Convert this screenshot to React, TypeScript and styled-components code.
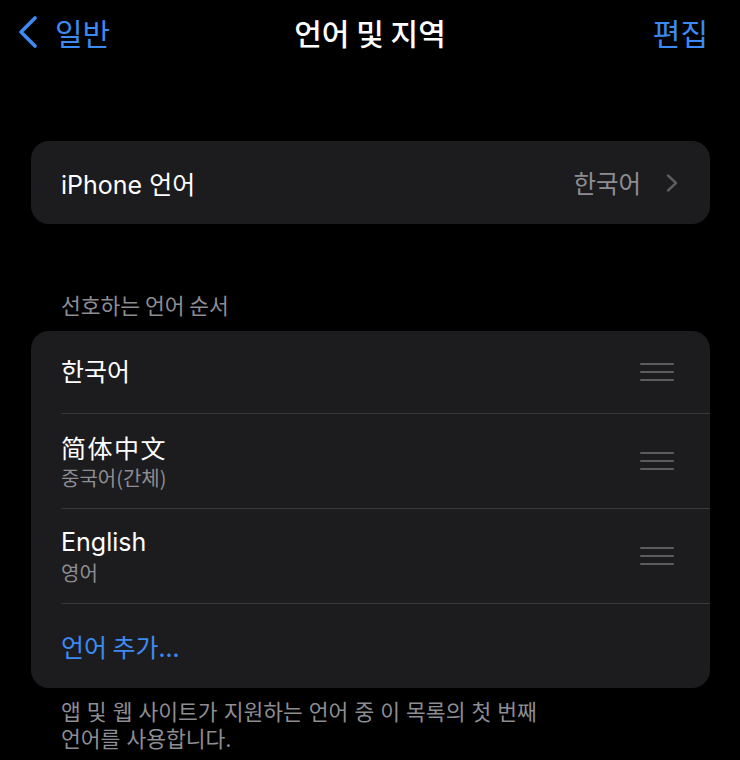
import React from "react";
import styled, { createGlobalStyle } from "styled-components";

const GlobalStyle = createGlobalStyle`
  html, body {
    margin: 0;
    padding: 0;
    background: #000;
  }
  body {
    font-family: Inter, "Noto Sans CJK KR", "Noto Sans CJK SC", sans-serif;
    color: #fff;
    -webkit-font-smoothing: antialiased;
  }
`;

const BLUE = "#3c8af3";
const GRAY = "#8d8d93";

const Screen = styled.div`
  width: 740px;
  height: 760px;
  overflow: hidden;
  background: #000;
`;

const NavBar = styled.header`
  height: 64px;
  display: grid;
  grid-template-columns: 1fr auto 1fr;
  align-items: center;
  padding: 0 17px;
`;

const BackButton = styled.div`
  display: flex;
  align-items: center;
  gap: 17px;
  color: ${BLUE};
  font-size: 30px;
  font-family: "Noto Sans CJK KR", sans-serif;
  line-height: 1;
`;

const Title = styled.h1`
  margin: 0;
  font-size: 30px;
  font-weight: 500;
  font-family: "Noto Sans CJK KR", sans-serif;
  color: #fff;
  line-height: 1;
`;

const EditButton = styled.div`
  justify-self: end;
  padding-right: 15px;
  color: ${BLUE};
  font-size: 30px;
  font-family: "Noto Sans CJK KR", sans-serif;
  line-height: 1;
`;

const Content = styled.main`
  padding: 77px 30px 0 31px;
`;

const Card = styled.section`
  background: #1c1c1e;
  border-radius: 18px;
  overflow: hidden;
`;

const SimpleRow = styled.div`
  height: 83px;
  display: flex;
  align-items: center;
  padding: 0 32px 0 30px;
`;

const Label = styled.span`
  font-size: 25px;
  color: #fff;
  flex: 1;
`;

const Value = styled.span`
  font-size: 24.5px;
  color: ${GRAY};
  font-family: "Noto Sans CJK KR", sans-serif;
  margin-right: 25px;
`;

const SectionHeader = styled.div`
  margin: 69px 0 14px;
  padding-left: 30px;
  font-size: 21.5px;
  line-height: 24px;
  color: ${GRAY};
  font-family: "Noto Sans CJK KR", sans-serif;
`;

const ListRow = styled.div<{ $h: number; $last?: boolean }>`
  height: ${(p) => p.$h}px;
  margin-left: 30px;
  padding-right: 36px;
  display: flex;
  align-items: center;
  border-bottom: ${(p) => (p.$last ? "none" : "1px solid #38383a")};
  box-sizing: border-box;
`;

const TextStack = styled.div`
  flex: 1;
  display: flex;
  flex-direction: column;
  gap: 4px;
`;

const Primary = styled.span<{ $lang?: string }>`
  font-size: 25px;
  letter-spacing: ${(p) => (p.$lang === "zh" ? "1.5px" : "0")};
  font-family: ${(p) =>
    p.$lang === "zh"
      ? `"Noto Sans CJK SC", sans-serif`
      : `Inter, "Noto Sans CJK KR", sans-serif`};
  color: #fff;
  line-height: 30px;
`;

const Secondary = styled.span`
  font-size: 20px;
  color: ${GRAY};
  line-height: 24px;
  font-family: "Noto Sans CJK KR", sans-serif;
`;

const AddLink = styled.span`
  font-size: 25px;
  color: ${BLUE};
  font-family: "Noto Sans CJK KR", sans-serif;
`;

const Footer = styled.p`
  margin: 11px 0 0;
  padding-left: 30px;
  font-size: 21.5px;
  line-height: 27px;
  color: ${GRAY};
  font-family: Inter, "Noto Sans CJK KR", sans-serif;
`;

const Grabber = () => (
  <svg width="34" height="18" viewBox="0 0 34 18" aria-hidden>
    <rect x="0" y="0" width="34" height="2" rx="1" fill="#5c5c60" />
    <rect x="0" y="8" width="34" height="2" rx="1" fill="#5c5c60" />
    <rect x="0" y="16" width="34" height="2" rx="1" fill="#5c5c60" />
  </svg>
);

const BackChevron = () => (
  <svg width="21" height="32" viewBox="0 0 21 32" aria-hidden>
    <path
      d="M18 2 L4 16 L18 30"
      fill="none"
      stroke={BLUE}
      strokeWidth="3.6"
      strokeLinecap="round"
      strokeLinejoin="round"
    />
  </svg>
);

const RightChevron = () => (
  <svg width="12" height="18" viewBox="0 0 12 18" aria-hidden>
    <path
      d="M2 1.5 L10 9 L2 16.5"
      fill="none"
      stroke="#5c5c60"
      strokeWidth="2.4"
      strokeLinecap="round"
      strokeLinejoin="round"
    />
  </svg>
);

export default function App() {
  return (
    <Screen>
      <GlobalStyle />
      <NavBar>
        <BackButton>
          <BackChevron />
          일반
        </BackButton>
        <Title>언어 및 지역</Title>
        <EditButton>편집</EditButton>
      </NavBar>
      <Content>
        <Card>
          <SimpleRow>
            <Label>iPhone 언어</Label>
            <Value>한국어</Value>
            <RightChevron />
          </SimpleRow>
        </Card>

        <SectionHeader>선호하는 언어 순서</SectionHeader>
        <Card>
          <ListRow $h={83}>
            <TextStack>
              <Primary>한국어</Primary>
            </TextStack>
            <Grabber />
          </ListRow>
          <ListRow $h={95}>
            <TextStack>
              <Primary $lang="zh">简体中文</Primary>
              <Secondary>중국어(간체)</Secondary>
            </TextStack>
            <Grabber />
          </ListRow>
          <ListRow $h={95}>
            <TextStack>
              <Primary>English</Primary>
              <Secondary>영어</Secondary>
            </TextStack>
            <Grabber />
          </ListRow>
          <ListRow $h={84} $last>
            <AddLink>언어 추가...</AddLink>
          </ListRow>
        </Card>
        <Footer>
          앱 및 웹 사이트가 지원하는 언어 중 이 목록의 첫 번째
          <br />
          언어를 사용합니다.
        </Footer>
      </Content>
    </Screen>
  );
}
